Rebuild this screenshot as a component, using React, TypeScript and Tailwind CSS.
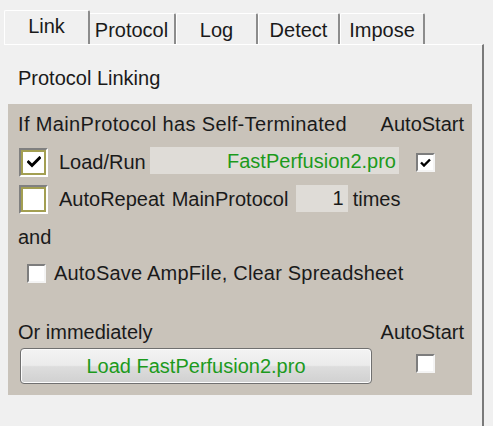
import React from "react";

const font = { fontFamily: '"Liberation Sans", Arial, sans-serif' };

const Check = () => (
  <svg width="14" height="12" viewBox="0 0 14 12" className="block">
    <path d="M1.5 6 L5 9.5 L12.5 2" fill="none" stroke="#000" strokeWidth="3" strokeLinecap="square" />
  </svg>
);

// big 3D checkbox (the old classic style)
const BigBox = ({ checked }: { checked?: boolean }) => (
  <div className="w-[29px] h-[29px] border-2 border-t-[#808080] border-l-[#808080] border-r-white border-b-white shrink-0">
    <div className="w-full h-full border-2 border-[#a39f52] bg-white flex items-center justify-center">
      {checked && <Check />}
    </div>
  </div>
);

const SmallBox = ({ checked }: { checked?: boolean }) => (
  <div className="w-[19px] h-[19px] border-2 border-t-[#7d7d7d] border-l-[#7d7d7d] border-r-[#f4f4f4] border-b-[#f4f4f4] bg-white shrink-0 flex items-center justify-center">
    {checked && (
      <svg width="11" height="9" viewBox="0 0 11 9" className="block">
        <path d="M1 4.5 L4 7.5 L10 1.5" fill="none" stroke="#000" strokeWidth="2.4" />
      </svg>
    )}
  </div>
);

const Tab = ({ label, w, active }: { label: string; w: string; active?: boolean }) => (
  <div
    className={`${w} ${active ? "h-[34px] pb-[4px] -mr-[2px] z-10" : "h-[31px] pt-[1px]"} flex items-center justify-center bg-[#f0f0f0] border-t border-l border-t-white border-l-white border-r-2 border-r-[#8c8c8c] rounded-t-[2px] text-[20px] text-[#1a1a1a] relative`}
  >
    {label}
  </div>
);

export default function App() {
  return (
    <div className="w-[493px] h-[426px] bg-[#f0f0f0] overflow-hidden" style={font}>
      {/* tab strip */}
      <div className="flex items-end pt-[10px] pl-[4px] h-[44px]">
        <Tab label="Link" w="w-[86px]" active />
        <Tab label="Protocol" w="w-[88px]" />
        <Tab label="Log" w="w-[82px]" />
        <Tab label="Detect" w="w-[82px]" />
        <Tab label="Impose" w="w-[85px]" />
      </div>

      {/* page */}
      <div className="ml-[4px] w-[480px] h-[382px] border-t border-t-white border-r-2 border-r-[#7a7a7a]">
        <div className="h-[59px] pt-[22px] pl-[14px] text-[20px] leading-[22px] text-[#1a1a1a]">Protocol Linking</div>

        <div className="ml-[4px] w-[464px] h-[291px] bg-[#c9c3ba] text-[20px] text-[#1a1a1a] flex flex-col">
          <div className="h-[40px] flex items-center justify-between pl-[10px] pr-[8px]">
            <span className="tracking-[0.35px]">If MainProtocol has Self-Terminated</span>
            <span>AutoStart</span>
          </div>

          <div className="h-[36px] flex items-center pl-[11px]">
            <BigBox checked />
            <span className="ml-[11px] w-[91px]">Load/Run</span>
            <div className="w-[249px] h-[27px] bg-[#dfdcd7] flex items-center justify-end pr-[3px] text-[#1c9a1c] -mt-[3px]">
              FastPerfusion2.pro
            </div>
            <div className="ml-[17px]">
              <SmallBox checked />
            </div>
          </div>

          <div className="h-[38px] flex items-center pl-[11px]">
            <BigBox />
            <span className="ml-[11px]">AutoRepeat</span>
            <span className="ml-[7px] w-[124px]">MainProtocol</span>
            <div className="w-[52px] h-[27px] bg-[#dfdcd7] flex items-center justify-end pr-[4px] -mt-[2px]">1</div>
            <span className="ml-[5px]">times</span>
          </div>

          <div className="h-[38px] flex items-center pl-[10px]">and</div>

          <div className="h-[34px] flex items-center pl-[19px]">
            <SmallBox />
            <span className="ml-[8px] tracking-[0.2px]">AutoSave AmpFile, Clear Spreadsheet</span>
          </div>

          <div className="h-[30px]" />

          <div className="h-[24px] flex items-center justify-between pl-[10px] pr-[8px]">
            <span>Or immediately</span>
            <span>AutoStart</span>
          </div>

          <div className="mt-[4px] flex items-center pl-[12px]">
            <button className="w-[352px] h-[36px] rounded-[4px] border border-[#707070] bg-[linear-gradient(to_bottom,#f3f3f3_0%,#ebebeb_48%,#dddddd_52%,#d0d0d0_100%)] shadow-[inset_0_0_0_1px_#fcfcfc] text-[#1c9a1c] text-[20px] flex items-center justify-center">
              Load FastPerfusion2.pro
            </button>
            <div className="ml-[44px] -mt-[5px]">
              <SmallBox />
            </div>
          </div>
        </div>
      </div>
    </div>
  );
}
